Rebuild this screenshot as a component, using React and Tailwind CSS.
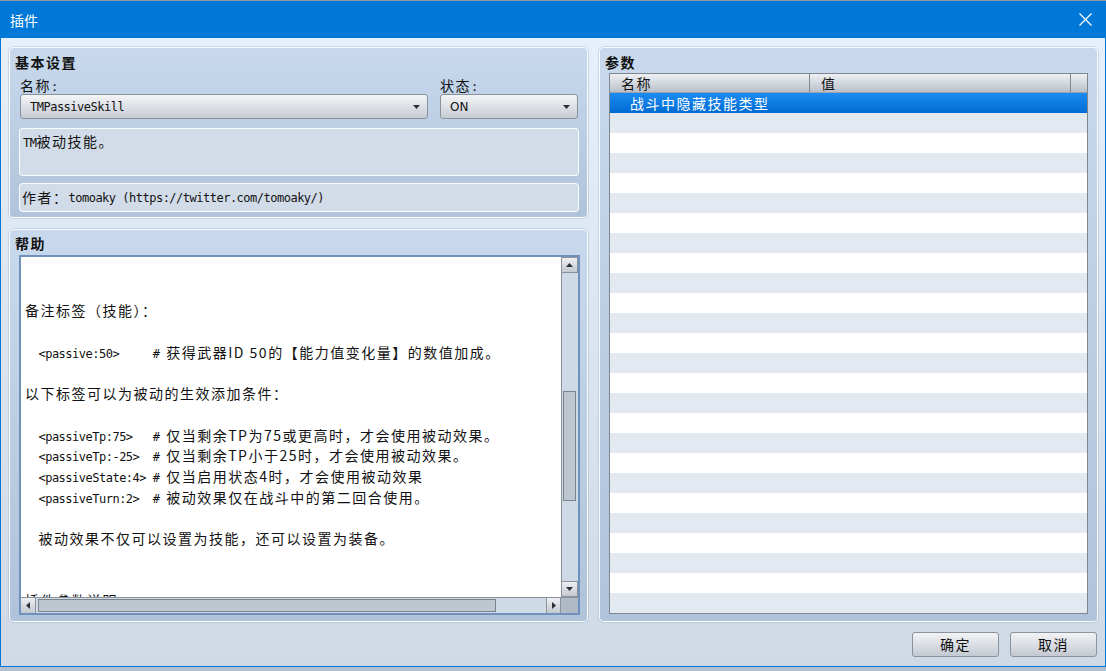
import React from 'react';

const CJK = "font-['Noto_Sans_CJK_SC',sans-serif] text-[14px] tracking-[1.5px]";
const MONO = "font-['DejaVu_Sans_Mono','Noto_Sans_CJK_SC',monospace] text-[12px] tracking-[-0.5px]";
const PANEL =
  'rounded-[5px] border border-white/90 bg-linear-to-b from-[#c8d9ed] to-[#afc3da] shadow-[0_0_0_1px_rgba(150,170,195,0.35)]';

const Arrow = ({ dir = 'down', className = '' }) => {
  const pts = {
    down: '0,0 7,0 3.5,4',
    up: '0,4 7,4 3.5,0',
    left: '4,0 4,7 0,3.5',
    right: '0,0 0,7 4,3.5',
  }[dir];
  const vertical = dir === 'down' || dir === 'up';
  return (
    <svg
      width={vertical ? 7 : 4}
      height={vertical ? 4 : 7}
      viewBox={vertical ? '0 0 7 4' : '0 0 4 7'}
      className={className}
    >
      <polygon points={pts} fill="#2b2f36" />
    </svg>
  );
};

const Combo = ({ value, width, mono }) => (
  <div
    className={`h-[25px] ${width} rounded-[3px] border border-[#8a929c] bg-linear-to-b from-[#f4f5f7] to-[#c6ccd4] flex items-center justify-between pl-[9px] pr-[7px]`}
  >
    <span
      className={
        mono
          ? `${MONO} text-[#111]`
          : "font-['DejaVu_Sans',sans-serif] text-[12px] text-[#111]"
      }
    >
      {value}
    </span>
    <Arrow />
  </div>
);

const ScrollBtn = ({ dir, className = '' }) => (
  <div
    className={`flex items-center justify-center border border-[#8a929c] bg-linear-to-b from-[#eef0f2] to-[#c3c9d0] ${className}`}
  >
    <Arrow dir={dir} />
  </div>
);

const Line = ({ pre = '', text = '' }) => (
  <div className="h-[20.7px] leading-[20.7px] whitespace-pre text-[#111]">
    {pre && <span className={MONO}>{pre}</span>}
    {text && <span className={CJK}>{text}</span>}
  </div>
);

const helpLines = [
  {},
  {},
  { text: '备注标签（技能）：' },
  {},
  { pre: '  <passive:50>     # ', text: '获得武器ID 50的【能力值变化量】的数值加成。' },
  {},
  { text: '以下标签可以为被动的生效添加条件：' },
  {},
  { pre: '  <passiveTp:75>   # ', text: '仅当剩余TP为75或更高时，才会使用被动效果。' },
  { pre: '  <passiveTp:-25>  # ', text: '仅当剩余TP小于25时，才会使用被动效果。' },
  { pre: '  <passiveState:4> # ', text: '仅当启用状态4时，才会使用被动效果' },
  { pre: '  <passiveTurn:2>  # ', text: '被动效果仅在战斗中的第二回合使用。' },
  {},
  { pre: '  ', text: '被动效果不仅可以设置为技能，还可以设置为装备。' },
  {},
  {},
  { text: '插件参数说明：' },
];

const rows = Array.from({ length: 25 }, (_, i) => i);

export default function App() {
  return (
    <div className="w-[1106px] h-[671px] overflow-hidden flex flex-col bg-[#b4c0ce]">
      {/* title bar */}
      <div className="h-[38px] shrink-0 border-t border-[#8e9aa6] bg-[#0078d7] flex items-center justify-between pl-[10px] pr-[14px]">
        <span className="font-['Noto_Sans_CJK_SC',sans-serif] text-[14px] text-white mt-[1px]">插件</span>
        <svg width="13" height="13" viewBox="0 0 13 13">
          <path d="M0.5 0.5 L12.5 12.5 M12.5 0.5 L0.5 12.5" stroke="#fff" strokeWidth="1.2" />
        </svg>
      </div>

      {/* body */}
      <div className="h-[629px] shrink-0 border-x border-b border-[#0078d7] bg-linear-to-b from-[#e6effc] to-[#cfdae6] pt-[9px] pl-[8px] pr-[7px] flex flex-col">
        <div className="h-[575px] flex gap-[11px]">
          {/* left column */}
          <div className="w-[579px] flex flex-col gap-[11px]">
            {/* basic settings */}
            <div className={`${PANEL} h-[171px] pt-[4px] pl-[9px] pr-[8px] flex flex-col`}>
              <div className={`${CJK} -ml-[4px] font-bold tracking-[0.5px] leading-[20px] text-[#111]`}>基本设置</div>
              <div className="mt-[4px] flex gap-[12px] ml-[1px]">
                <div className="flex flex-col">
                  <div className="h-[18px] leading-[18px] text-[#111]">
                    <span className={CJK}>名称</span>
                    <span className={MONO}>:</span>
                  </div>
                  <Combo value="TMPassiveSkill" width="w-[408px]" mono />
                </div>
                <div className="flex flex-col">
                  <div className="h-[18px] leading-[18px] text-[#111]">
                    <span className={CJK}>状态</span>
                    <span className={MONO}>:</span>
                  </div>
                  <Combo value="ON" width="w-[138px]" />
                </div>
              </div>
              <div className="mt-[9px] h-[48px] rounded-[4px] border border-white/90 bg-[#d1dce8] pl-[3px] pt-[2px] leading-[20px] text-[#111]">
                <span className={MONO}>TM</span>
                <span className={CJK}>被动技能。</span>
              </div>
              <div className="mt-[7px] h-[29px] rounded-[4px] border border-white/90 bg-[#d1dce8] pl-[2px] flex items-center text-[#111] whitespace-pre">
                <span className={CJK}>作者：</span>
                <span className={MONO}>tomoaky (https://twitter.com/tomoaky/)</span>
              </div>
            </div>

            {/* help */}
            <div className={`${PANEL} h-[393px] pt-[3px] pl-[9px] pr-[7px] flex flex-col`}>
              <div className={`${CJK} -ml-[4px] font-bold tracking-[0.5px] leading-[20px] text-[#111]`}>帮助</div>
              <div className="mt-[2px] h-[360px] border-2 border-[#6f91bb] bg-white flex flex-col">
                <div className="h-[340px] flex">
                  <div className="flex-1 overflow-hidden pt-[2px] pl-[4px]">
                    {helpLines.map((l, i) => (
                      <Line key={i} pre={l.pre} text={l.text} />
                    ))}
                  </div>
                  <div className="w-[17px] flex flex-col bg-[#cfdae7] border-l border-[#8a929c]">
                    <ScrollBtn dir="up" className="h-[16px] border-l-0" />
                    <div className="flex-1 relative">
                      <div className="absolute left-[1px] top-[118px] w-[13px] h-[110px] border border-[#7b838d] bg-[#bec6d0]" />
                    </div>
                    <ScrollBtn dir="down" className="h-[16px] border-l-0" />
                  </div>
                </div>
                <div className="h-[16px] flex border-t border-[#8a929c] bg-[#cfdae7]">
                  <ScrollBtn dir="left" className="w-[15px] border-y-0 border-l-0" />
                  <div className="flex-1 relative">
                    <div className="absolute left-[2px] top-[1px] w-[458px] h-[13px] border border-[#7b838d] bg-[#bec6d0]" />
                  </div>
                  <ScrollBtn dir="right" className="w-[15px] border-y-0" />
                  <div className="w-[17px] bg-[#b0bac7]" />
                </div>
              </div>
            </div>
          </div>

          {/* parameters */}
          <div className={`${PANEL} w-[499px] pt-[4px] pl-[9px] pr-[9px] pb-[7px] flex flex-col`}>
            <div className={`${CJK} -ml-[4px] font-bold tracking-[0.5px] leading-[20px] text-[#111]`}>参数</div>
            <div className="mt-[1px] flex-1 border border-[#80868e] bg-white overflow-hidden flex flex-col">
              <div className="h-[19px] shrink-0 flex bg-linear-to-b from-[#eef0f3] to-[#b9c0c9] border-b border-[#9aa1aa]">
                <div className="w-[200px] border-r border-[#80868e] pl-[11px] leading-[19px] text-[#111]">
                  <span className={CJK}>名称</span>
                </div>
                <div className="w-[261px] border-r border-[#80868e] pl-[11px] leading-[19px] text-[#111]">
                  <span className={CJK}>值</span>
                </div>
                <div className="flex-1" />
              </div>
              <div className="h-[20px] shrink-0 bg-linear-to-b from-[#1b8cf2] to-[#006bd3] pl-[20px] leading-[20px] text-white">
                <span className={CJK}>战斗中隐藏技能类型</span>
              </div>
              {rows.map((i) => (
                <div
                  key={i}
                  className={i % 2 === 0 ? 'h-[20px] shrink-0 bg-[#e3e9f0]' : 'h-[20px] shrink-0 bg-white'}
                />
              ))}
            </div>
          </div>
        </div>

        {/* buttons */}
        <div className="mt-[10px] h-[25px] flex justify-end gap-[11px] mr-[1px]">
          {['确定', '取消'].map((t) => (
            <div
              key={t}
              className="w-[87px] h-[25px] rounded-[3px] border border-[#8a929c] bg-linear-to-b from-[#f2f3f5] to-[#c4cad2] flex items-center justify-center text-[#111]"
            >
              <span className={CJK}>{t}</span>
            </div>
          ))}
        </div>
      </div>
    </div>
  );
}
